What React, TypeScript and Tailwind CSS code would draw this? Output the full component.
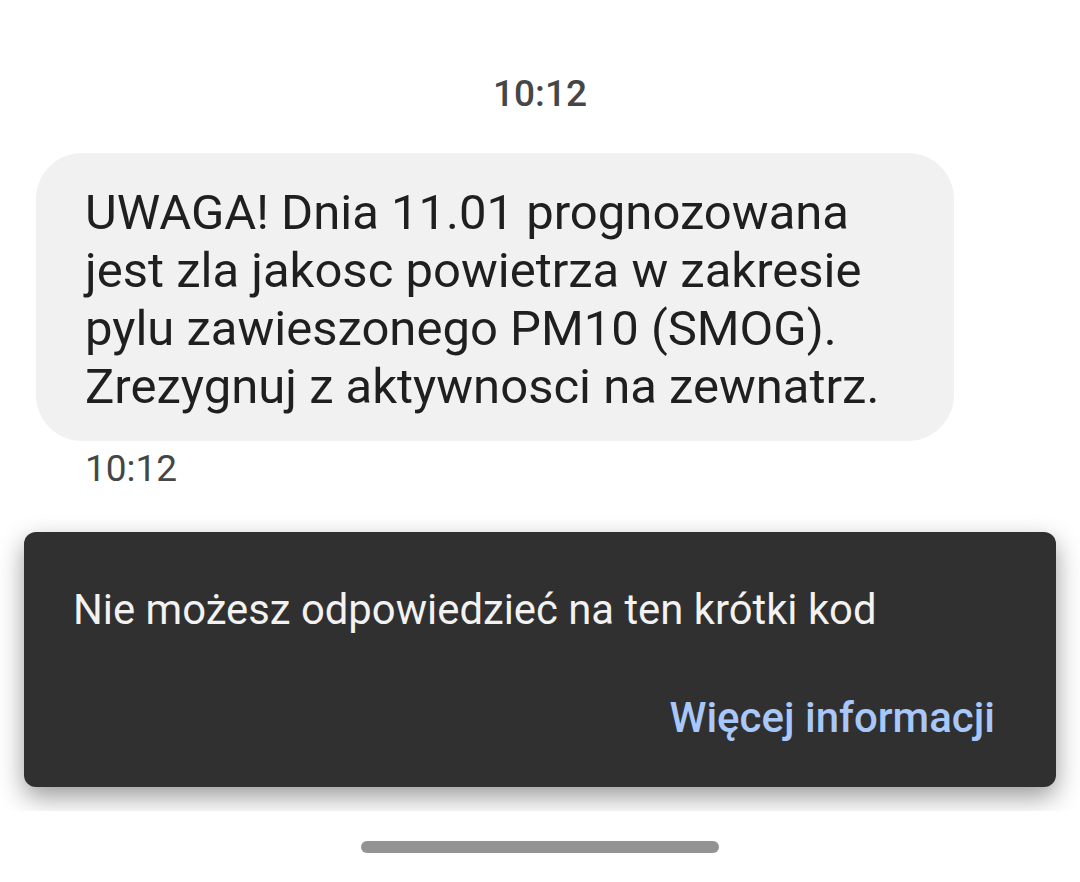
export default function App() {
  return (
    <div className="w-[1080px] h-[882px] bg-white flex flex-col font-['Roboto',sans-serif] overflow-hidden">
      <div className="h-[811px] shrink-0 overflow-hidden flex flex-col">
        <div className="pt-[72px] text-center text-[37px] leading-[44px] font-medium text-[#444746]">10:12</div>
        <div className="mt-[37px] ml-[36px] w-[918px] rounded-[46px] bg-[#f1f1f1] pl-[49px] pt-[31px] pb-[25px] text-[49px] leading-[58px] text-[#1f1f1f]">
          UWAGA! Dnia 11.01 prognozowana
          <br />
          jest zla jakosc powietrza w zakresie
          <br />
          pylu zawieszonego PM10 (SMOG).
          <br />
          Zrezygnuj z aktywnosci na zewnatrz.
        </div>
        <div className="mt-[6px] ml-[85px] text-[37px] leading-[44px] text-[#444746]">10:12</div>
        <div className="mt-[41px] mx-[24px] rounded-[12px] bg-[#303030] shadow-[0_10px_26px_rgba(0,0,0,0.4)] flex flex-col pl-[49px] pr-[61px] pt-[54px] pb-[45px]">
          <div className="text-[41.8px] leading-[48px] text-[#f2f2f2] whitespace-nowrap">Nie możesz odpowiedzieć na ten krótki kod</div>
          <div className="mt-[60px] flex justify-end">
            <span className="text-[42px] leading-[48px] font-medium text-[#a8c7fa]">Więcej informacji</span>
          </div>
        </div>
      </div>
      <div className="flex-1 flex justify-center pt-[30px]">
        <div className="w-[358px] h-[12px] rounded-full bg-[#939393]" />
      </div>
    </div>
  );
}
